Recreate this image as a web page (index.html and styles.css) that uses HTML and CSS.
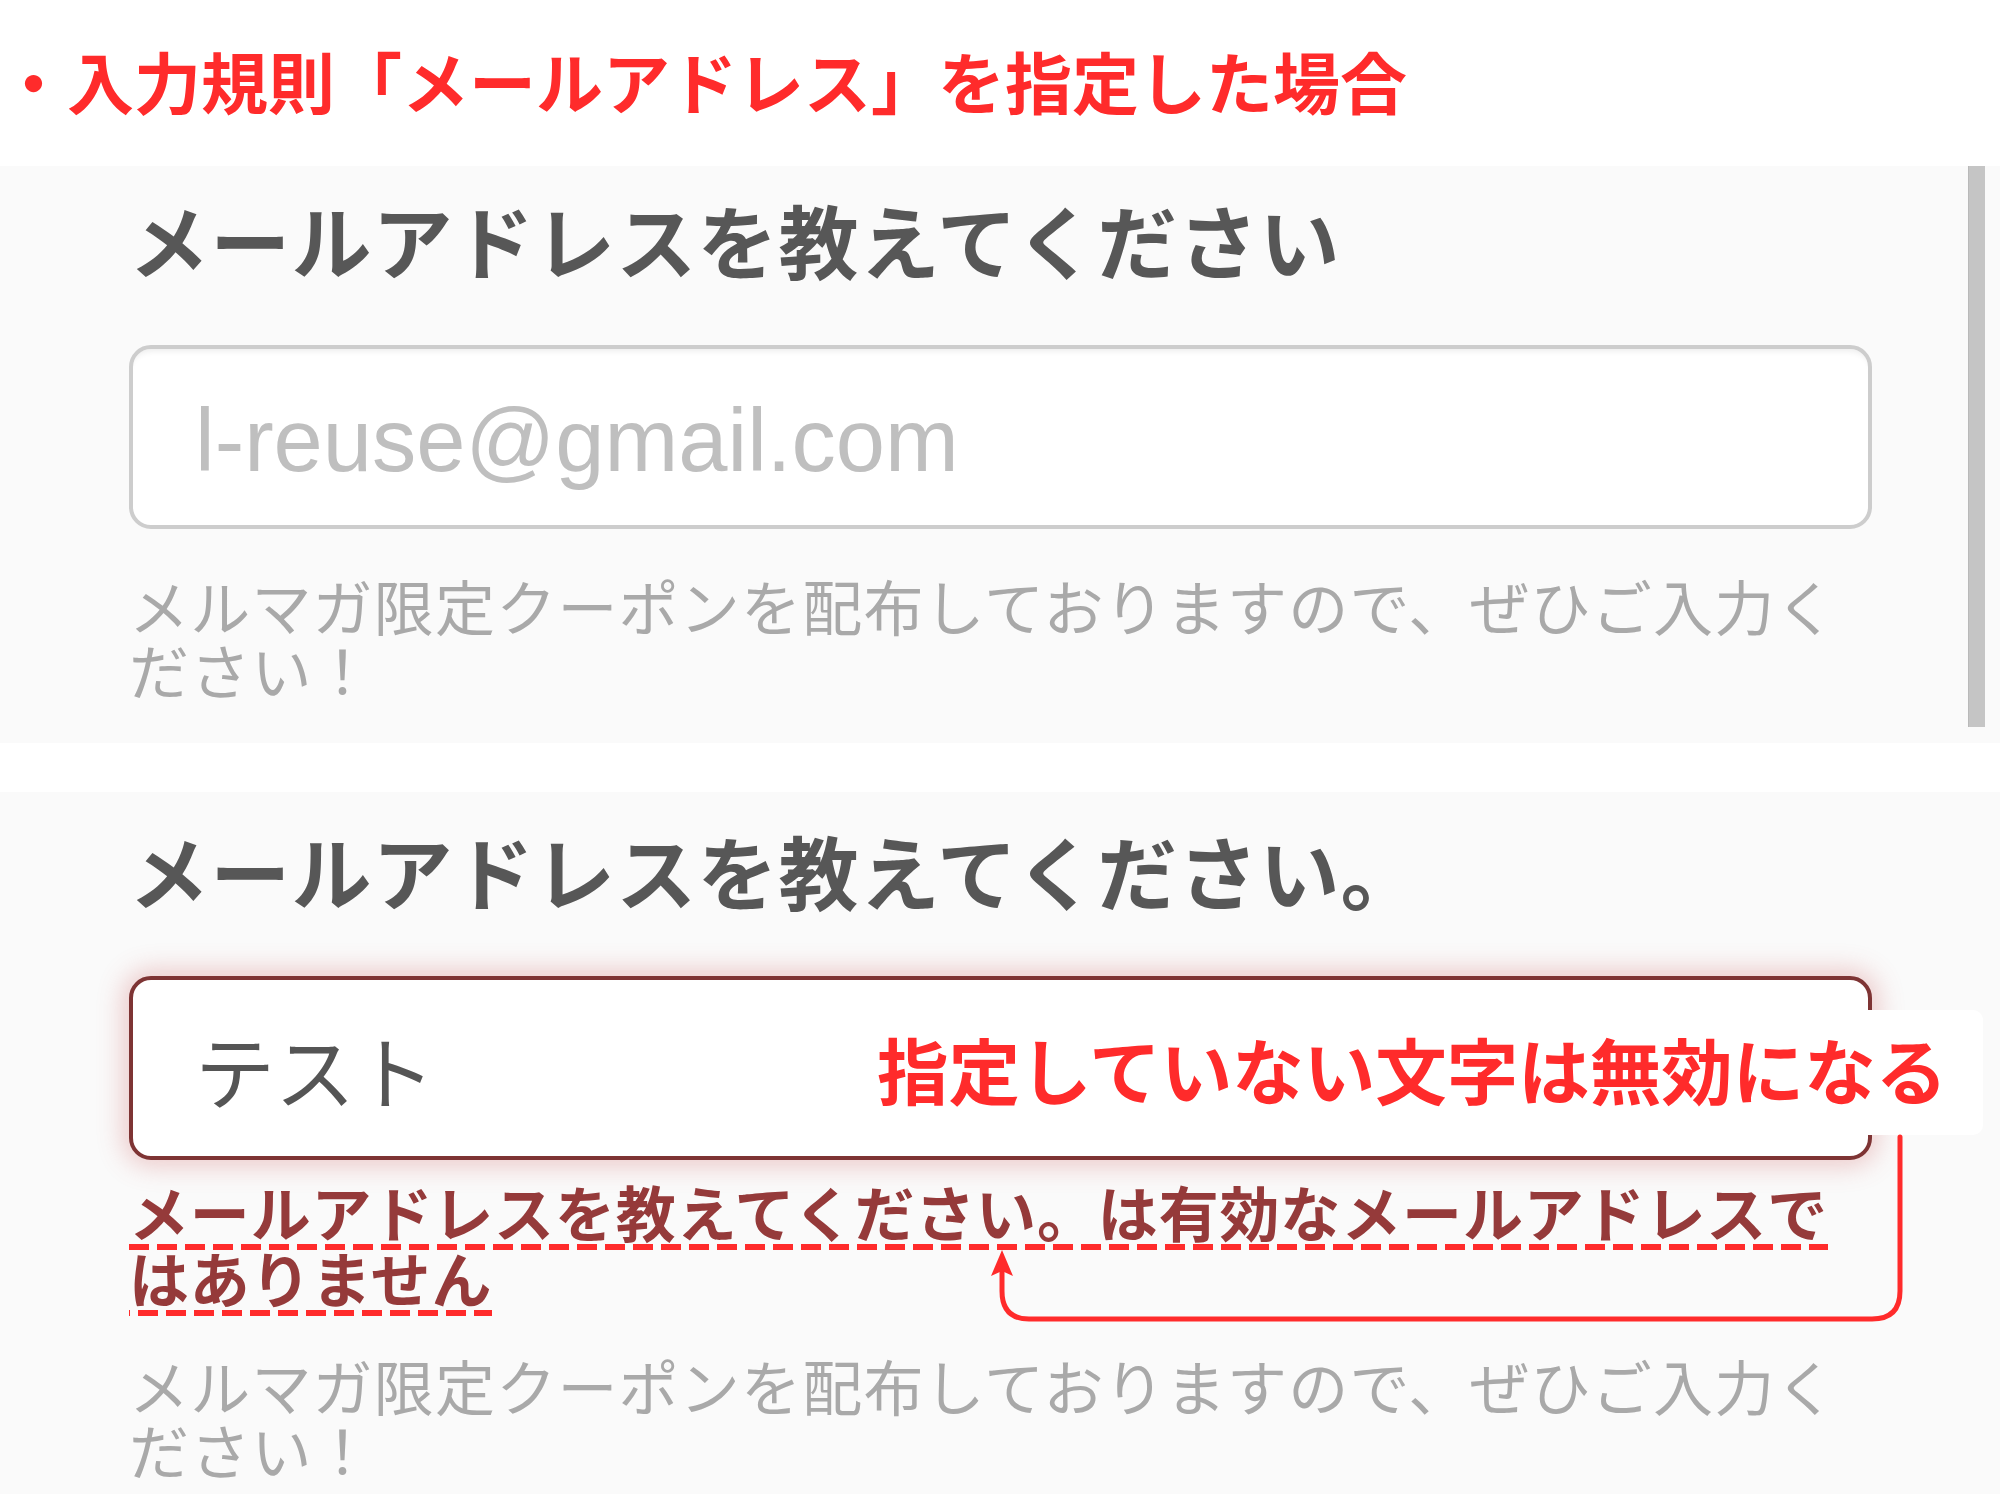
FILE: index.html
```html
<!DOCTYPE html>
<html lang="ja">
<head>
    <meta charset="UTF-8">
    <title>入力規則</title>
    <link rel="stylesheet" href="styles.css">
</head>
<body>
<div class="page">
    <h1 class="title">・入力規則「メールアドレス」を指定した場合</h1>

    <!-- 通常の状態 -->
    <section class="panel">
        <div class="panel-body">
            <h2 class="label">メールアドレスを教えてください</h2>
            <div class="field"><span class="field-placeholder">l-reuse@gmail.com</span></div>
            <p class="hint">メルマガ限定クーポンを配布しておりますので、ぜひご入力ください！</p>
        </div>
        <div class="scrollbar"></div>
    </section>

    <!-- エラーの状態 -->
    <section class="panel panel-error">
        <div class="panel-body">
            <h2 class="label">メールアドレスを教えてください。</h2>
            <div class="field field-invalid"><span class="field-value">テスト</span></div>
            <p class="error"><span class="error-text">メールアドレスを教えてください。は有効なメールアドレスではありません</span></p>
            <p class="hint">メルマガ限定クーポンを配布しておりますので、ぜひご入力ください！</p>
        </div>
    </section>

    <!-- 注釈 -->
    <div class="note">指定していない文字は無効になる</div>
    <svg class="arrow" viewBox="0 0 2000 1494">
        <path d="M1900 1137 V1291 Q1900 1319 1872 1319 H1029 Q1002 1319 1002 1291 V1270" fill="none" stroke="#ff2b2b" stroke-width="5" stroke-linecap="round"/>
        <polygon points="1002,1250 991,1276 1002,1271 1013,1276" fill="#ff2b2b"/>
    </svg>
</div>
</body>
</html>
```

FILE: styles.css
```css
h1,h2,p{margin:0;padding:0}
html,body{overflow:hidden}
body{
    margin:0;
    background:#fff;
    font-family:"Noto Sans CJK JP", sans-serif;
    color:#555;
}
.page{
    position:relative;
    width:2000px;
    height:1494px;
    overflow:hidden;
}
.title{
    height:166px;
    font-size:67px;
    line-height:160px;
    font-weight:700;
    color:#ff2b2b;
    white-space:nowrap;
}
.panel{
    display:flex;
    background:#fafafa;
}
.panel + .panel{
    margin-top:49px;
}
.panel-body{
    flex:none;
    width:1743px;
    margin-left:129px;
    padding:22px 0 42px;
}
.panel-error .panel-body{
    padding-top:27px;
}
.label{
    font-size:80px;
    line-height:100px;
    letter-spacing:1.2px;
    font-weight:700;
    color:#575757;
    white-space:nowrap;
}
.field{
    display:flex;
    align-items:center;
    height:184px;
    box-sizing:border-box;
    margin-top:57px;
    padding-left:62px;
    border:4px solid #cdcdcd;
    border-radius:22px;
    background:#fff;
    box-shadow:inset 0 7px 6px -5px rgba(0,0,0,.08);
}
.field-placeholder{
    margin-top:8px;
    font-family:"Liberation Sans", sans-serif;
    font-size:88.5px;
    line-height:1;
    color:#bfbfbf;
}
.field-value{
    font-size:80px;
    line-height:1;
    color:#555;
}
.field-invalid{
    border-color:#7e3434;
    box-shadow:0 0 26px 6px rgba(205,90,90,.3);
}
.hint{
    margin-top:44px;
    font-size:60px;
    line-height:64px;
    letter-spacing:1.2px;
    color:#a9a9a9;
}
.error{
    margin-top:18px;
    font-size:60px;
    line-height:66px;
    letter-spacing:0.85px;
    font-weight:700;
    color:#953a3a;
}
.error + .hint{
    margin-top:43px;
}
.error-text{
    background:linear-gradient(to right, #ff2b2b 20px, transparent 20px) 0 calc(100% - 4px) / 28px 6px repeat-x;
}
.scrollbar{
    flex:none;
    width:17px;
    margin:0 15px 16px auto;
    background:#c5c5c5;
    border-left:1px solid #b9b9b9;
    box-sizing:border-box;
}
.note{
    position:absolute;
    left:868px;
    top:1010px;
    width:1115px;
    height:125px;
    box-sizing:border-box;
    padding-left:9px;
    background:#fff;
    border-radius:10px;
    font-size:71.5px;
    line-height:117px;
    font-weight:700;
    color:#ff2b2b;
    white-space:nowrap;
}
.arrow{
    position:absolute;
    left:0;
    top:0;
    width:2000px;
    height:1494px;
    pointer-events:none;
}
```
